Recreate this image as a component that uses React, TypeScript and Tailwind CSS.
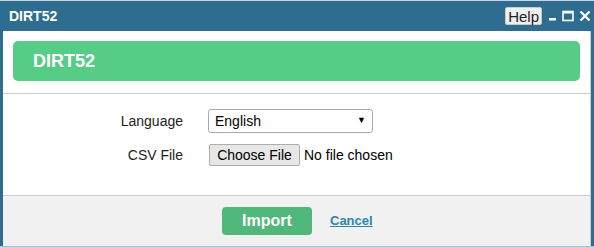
const App = () => {
  return (
    <div className="w-[594px] h-[247px] flex flex-col bg-[#2e6c90] border-t border-[#c9d6df] border-b border-b-[#a7c2d4] font-['Liberation_Sans',Arial,sans-serif] overflow-hidden">
      <div className="h-[30px] flex items-center justify-between pl-[9px] pr-[3px]">
        <span className="text-white text-[14px] font-bold">DIRT52</span>
        <div className="flex items-center">
          <button className="h-[18px] px-[2px] bg-[#f0f0f0] border border-[#c8c8c8] text-[15px] leading-[15px] text-[#222] rounded-[2px]">
            Help
          </button>
          <svg width="10" height="10" viewBox="0 0 10 10" className="ml-[6px]">
            <rect x="1" y="7" width="7" height="2.5" fill="white" />
          </svg>
          <svg width="12" height="12" viewBox="0 0 12 12" className="ml-[4px]">
            <rect x="1" y="1.5" width="10" height="9" fill="none" stroke="white" strokeWidth="1.6" />
            <rect x="1" y="1" width="10" height="2.5" fill="white" />
          </svg>
          <svg width="12" height="12" viewBox="0 0 12 12" className="ml-[5px]">
            <path d="M1.5 1.5 L10.5 10.5 M10.5 1.5 L1.5 10.5" stroke="white" strokeWidth="2.4" />
          </svg>
        </div>
      </div>

      <div className="flex-1 flex flex-col ml-[3px] mr-[3px] bg-white border-r border-[#d0d0d0]">
        <div className="px-[10px] pt-[10px] pb-[12px]">
          <div className="h-[40px] rounded-[5px] bg-[#57cc87] flex items-center pl-[20px] text-white text-[18px] font-bold">
            DIRT52
          </div>
        </div>

        <div className="border-t border-[#cccccc] flex-1 flex flex-col gap-[11px] pt-[15px]">
          <div className="flex items-center">
            <label className="w-[180px] text-right text-[14px] text-[#222]">Language</label>
            <div className="ml-[25px] w-[165px] h-[24px] border border-[#aaaaaa] rounded-[3px] flex items-center justify-between px-[6px] text-[14px] text-black">
              <span>English</span>
              <span className="text-[9px]">▼</span>
            </div>
          </div>
          <div className="flex items-center">
            <label className="w-[180px] text-right text-[14px] text-[#222]">CSV File</label>
            <button className="ml-[26px] h-[22px] w-[91px] border border-[#adadad] bg-[#e7e7e7] rounded-[2px] text-[14px] text-black">
              Choose File
            </button>
            <span className="ml-[4px] text-[14px] text-black">No file chosen</span>
          </div>
        </div>

        <div className="h-[51px] border-t border-[#cccccc] bg-[#f1f1f1] flex items-center">
          <button className="ml-[219px] w-[90px] h-[28px] rounded-[4px] bg-[#51b87b] text-white text-[16px] font-bold">
            Import
          </button>
          <a href="#" className="ml-[18px] text-[13px] font-bold text-[#2b86ad] underline">
            Cancel
          </a>
        </div>
      </div>
    </div>
  );
};

export default App;
